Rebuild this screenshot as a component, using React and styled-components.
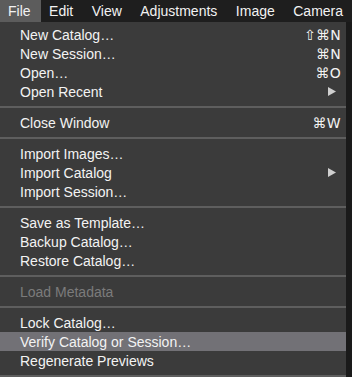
import React from "react";
import styled, { createGlobalStyle } from "styled-components";

const Global = createGlobalStyle`
  html, body {
    margin: 0;
    padding: 0;
    background: #1c1c1c;
    overflow: hidden;
  }
  body {
    font-family: "Liberation Sans", Arial, "DejaVu Sans", sans-serif;
    -webkit-font-smoothing: antialiased;
  }
`;

const Screen = styled.div`
  width: 352px;
  height: 377px;
  display: flex;
  flex-direction: column;
  overflow: hidden;
  background: #1c1c1c;
`;

const MenuBar = styled.div`
  height: 22px;
  flex-shrink: 0;
  display: flex;
  align-items: stretch;
  background: #1e1e1e;
  color: #f2f2f2;
  font-size: 14px;
  white-space: nowrap;
`;

const BarItem = styled.div`
  display: flex;
  align-items: center;
  padding: 0 10.5px 0 8px;
  background: ${(p) => (p.$open ? "#5c5c5c" : "transparent")};
`;

const Body = styled.div`
  flex-shrink: 0;
  display: flex;
`;

const Dropdown = styled.div`
  width: 346px;
  padding-top: 3px;
  background: #3b3b3b;
  color: #f3f3f3;
  font-size: 14px;
`;

const Edge = styled.div`
  flex: 1;
  background: #1a1a1a;
`;

const Row = styled.div`
  height: 19px;
  display: flex;
  align-items: center;
  padding: 0 5px 0 20px;
  white-space: nowrap;
  background: ${(p) => (p.$hover ? "#727176" : "transparent")};
  color: ${(p) => (p.$disabled ? "#7b7b7b" : "#f3f3f3")};
`;

const Label = styled.span`
  flex: 1;
`;

const Shortcut = styled.span`
  font-family: "DejaVu Sans", "Liberation Sans", sans-serif;
  font-size: 14px;
  letter-spacing: 0.3px;
`;

const Arrow = styled.svg`
  width: 8px;
  height: 9px;
  margin-right: 5px;
  fill: #cfcfcf;
`;

const Separator = styled.div`
  height: 12px;
  display: flex;
  align-items: center;
  &::after {
    content: "";
    flex: 1;
    height: 2px;
    background: #5e5e5e;
  }
`;

const groups = [
  [
    { label: "New Catalog…", key: "⇧⌘N" },
    { label: "New Session…", key: "⌘N" },
    { label: "Open…", key: "⌘O" },
    { label: "Open Recent", sub: true },
  ],
  [{ label: "Close Window", key: "⌘W" }],
  [
    { label: "Import Images…" },
    { label: "Import Catalog", sub: true },
    { label: "Import Session…" },
  ],
  [
    { label: "Save as Template…" },
    { label: "Backup Catalog…" },
    { label: "Restore Catalog…" },
  ],
  [{ label: "Load Metadata", disabled: true }],
  [
    { label: "Lock Catalog…" },
    { label: "Verify Catalog or Session…", hover: true },
    { label: "Regenerate Previews" },
  ],
];

const menus = ["File", "Edit", "View", "Adjustments", "Image", "Camera"];

export default function App() {
  return (
    <Screen>
      <Global />
      <MenuBar>
        {menus.map((m, i) => (
          <BarItem key={m} $open={i === 0}>
            {m}
          </BarItem>
        ))}
      </MenuBar>
      <Body>
        <Dropdown>
          {groups.map((g, gi) => (
            <React.Fragment key={gi}>
              {gi > 0 && <Separator />}
              {g.map((it) => (
                <Row key={it.label} $hover={it.hover} $disabled={it.disabled}>
                  <Label>{it.label}</Label>
                  {it.key && <Shortcut>{it.key}</Shortcut>}
                  {it.sub && (
                    <Arrow viewBox="0 0 8 9">
                      <polygon points="0,0 8,4.5 0,9" />
                    </Arrow>
                  )}
                </Row>
              ))}
            </React.Fragment>
          ))}
          <Separator />
        </Dropdown>
        <Edge />
      </Body>
    </Screen>
  );
}
